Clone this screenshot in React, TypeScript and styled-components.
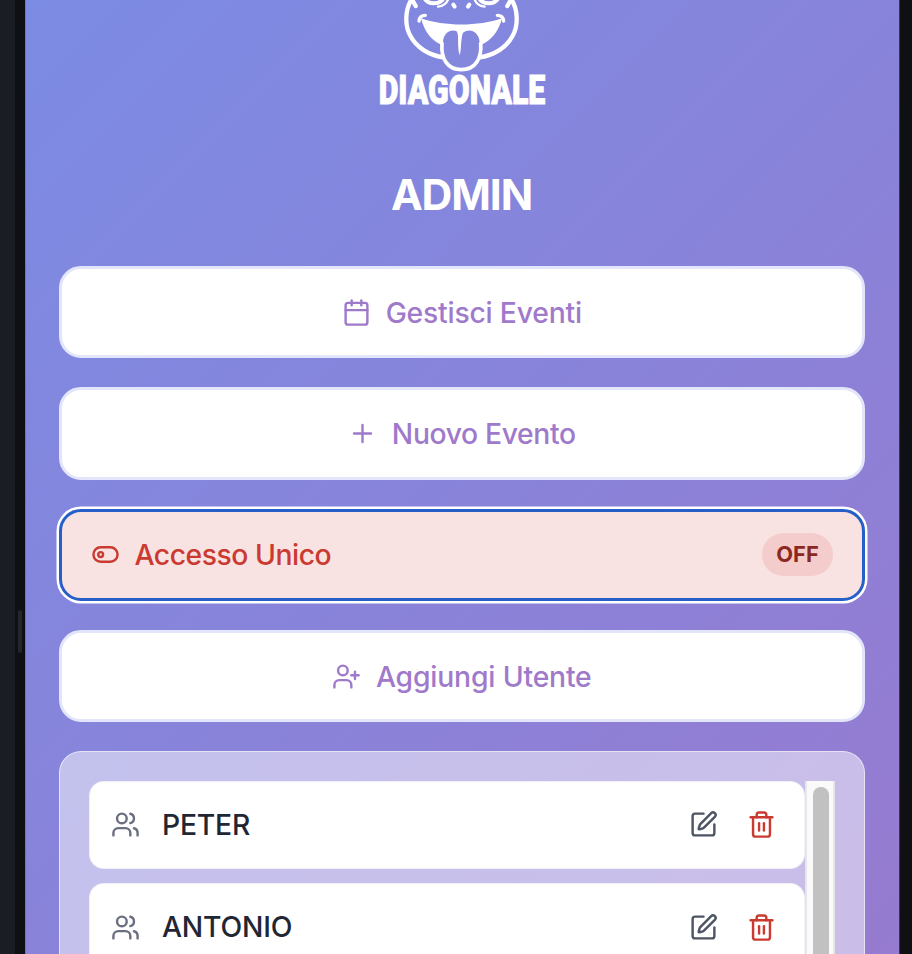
import React from "react";
import styled, { createGlobalStyle, css } from "styled-components";
import { Calendar, Plus, UserPlus, Users, SquarePen, Trash2 } from "lucide-react";

const GlobalStyle = createGlobalStyle`
  * { box-sizing: border-box; }
  body { margin: 0; overflow: hidden; background: #0f1014; }
`;

const Shell = styled.div`
  display: grid;
  grid-template-columns: 15px 10px 875px 12px;
  width: 912px;
  height: 954px;
  overflow: hidden;
  background: #0f1014;
  font-family: Inter, "Liberation Sans", sans-serif;
`;

const SidePanel = styled.div`
  background: #1a1d24;
`;

const Divider = styled.div`
  padding: 610px 3px 0 3px;
  background: #0f1014;
`;

const Grip = styled.div`
  width: 4px;
  height: 43px;
  border-radius: 2px;
  background: #25262d;
`;

const Screen = styled.main`
  display: flex;
  flex-direction: column;
  align-items: center;
  height: 954px;
  overflow: hidden;
  padding: 0 34px 0 33px;
  border-left: 1px solid #6d74b4;
  border-right: 1px solid #3a3650;
  background: linear-gradient(135deg, #7c8be3 0%, #8784db 45%, #967bd0 100%);
`;

const Logo = styled.svg`
  flex: none;
  width: 200px;
  height: 120px;
  overflow: visible;
`;

const Title = styled.h1`
  margin: 45px 1px 42px 0;
  height: 59px;
  line-height: 59px;
  font-size: 42.6px;
  font-weight: 700;
  letter-spacing: -1.1px;
  color: #fff;
`;

const Actions = styled.div`
  display: grid;
  grid-auto-rows: 92.3px;
  gap: 29px;
  width: 806px;
  flex: none;
`;

const ActionButton = styled.button<{ $danger?: boolean }>`
  display: flex;
  align-items: center;
  justify-content: center;
  gap: 14.5px;
  padding: 0 29px;
  border: 3px solid #e3e6fa;
  border-radius: 22px;
  background: #fff;
  color: #9f7acb;
  font: 500 28.3px Inter, "Liberation Sans", sans-serif;
  ${(p) =>
    p.$danger &&
    css`
      justify-content: flex-start;
      border-color: #275fc8;
      background: #f8e3e2;
      color: #ca3a31;
      box-shadow: 0 0 0 2.5px #fff;
    `}
`;

const Label = styled.span<{ $spacing: number }>`
  padding-top: 1px;
  letter-spacing: ${(p) => p.$spacing}px;
  white-space: nowrap;
`;

const StatusPill = styled.span`
  display: flex;
  align-items: center;
  justify-content: center;
  width: 71px;
  height: 43px;
  margin-left: auto;
  padding-bottom: 1px;
  border-radius: 22px;
  background: #f4cccb;
  color: #8c2822;
  font-size: 21.8px;
  font-weight: 700;
`;

const ListPanel = styled.section`
  display: flex;
  flex: none;
  width: 806px;
  height: 260px;
  margin-top: 29px;
  padding: 29px 29px 0;
  border: 1px solid rgba(255, 255, 255, 0.55);
  border-radius: 22px;
  background: rgba(255, 255, 255, 0.5);
`;

const UserList = styled.div`
  display: grid;
  grid-auto-rows: 88px;
  gap: 14.2px;
  width: 716px;
`;

const UserRow = styled.div`
  display: flex;
  align-items: center;
  padding: 0 28px 0.4px 21px;
  border: 1px solid #f1f0f8;
  border-radius: 14.5px;
  background: #fff;
  color: #6b7080;
`;

const UserName = styled.span`
  flex: 1;
  margin-left: 22px;
  padding-top: 0.6px;
  font-size: 28.3px;
  font-weight: 500;
  letter-spacing: -0.2px;
  color: #1f2735;
`;

const RowActions = styled.div`
  display: flex;
  gap: 29px;
  color: #4d5563;
`;

const DeleteIcon = styled(Trash2)`
  color: #ca3a31;
`;

const ScrollTrack = styled.div`
  width: 30px;
  padding: 6px 4px 0 6px;
  border: solid #e7e7e7;
  border-width: 0 2px;
  background: #fafafa;
`;

const ScrollThumb = styled.div`
  width: 16px;
  height: 240px;
  border-radius: 8px;
  background: #c1c1c1;
`;

const FrogLogo = () => (
  <Logo viewBox="0 0 600 360" fill="none" stroke="#fff" strokeLinecap="round" strokeLinejoin="round">
    <path d="M149 -2C128 30 128 79 146 109C163 142 200 165 243 172" strokeWidth="13" />
    <path d="M448 -2C469 30 469 79 451 109C434 142 397 165 354 172" strokeWidth="13" />
    <path d="M149 -3L161 18M448 -3L436 18" strokeWidth="13" />
    <path d="M188 -4C199 14 232 15 244 -4M352 -4C364 15 397 14 408 -4" strokeWidth="12" />
    <path d="M228 20C245 18 257 7 260 -8M368 20C351 18 339 7 336 -8" strokeWidth="7" />
    <path d="M274 14L278 20M322 14L318 20" strokeWidth="12" />
    <path
      d="M177 55C247 80 349 80 420 55C411 93 388 121 361 133L353 150L243 150L235 133C208 121 187 94 177 55Z"
      fill="#fff"
      stroke="none"
    />
    <path d="M171 63C172 52 178 46 190 46M425 63C424 52 418 46 406 46" strokeWidth="10" />
    <path
      d="M292 98C270 83 245 96 243 126C241 170 257 207 298 209C339 207 355 170 353 126C350 96 325 83 303 98"
      fill="#8388dc"
      stroke="none"
    />
    <path d="M240 130C236 175 256 209 298 209C340 209 360 175 356 130" strokeWidth="11" />
    <path d="M283 92C293 103 284 137 293 166C299 150 295 108 306 92Z" fill="#fff" stroke="none" />
    <text
      x="50"
      y="313"
      textLength="500"
      lengthAdjust="spacingAndGlyphs"
      fill="#fff"
      stroke="#fff"
      strokeWidth="3"
      fontFamily="Roboto, sans-serif"
      fontSize="122"
      fontWeight="900"
    >
      DIAGONALE
    </text>
  </Logo>
);

const ToggleIcon = () => (
  <svg width="29" height="29" viewBox="0 0 24 24" fill="none" stroke="currentColor" strokeWidth="2">
    <rect x="2" y="6" width="20" height="12" rx="6" />
    <circle cx="8" cy="12" r="2" />
  </svg>
);

const users = ["PETER", "ANTONIO"];

export default function App() {
  return (
    <Shell>
      <GlobalStyle />
      <SidePanel />
      <Divider>
        <Grip />
      </Divider>
      <Screen>
        <FrogLogo />
        <Title>ADMIN</Title>
        <Actions>
          <ActionButton>
            <Calendar size={29} />
            <Label $spacing={-0.2}>Gestisci Eventi</Label>
          </ActionButton>
          <ActionButton>
            <Plus size={29} />
            <Label $spacing={-0.37}>Nuovo Evento</Label>
          </ActionButton>
          <ActionButton $danger>
            <ToggleIcon />
            <Label $spacing={-0.47}>Accesso Unico</Label>
            <StatusPill>OFF</StatusPill>
          </ActionButton>
          <ActionButton>
            <UserPlus size={29} />
            <Label $spacing={-0.17}>Aggiungi Utente</Label>
          </ActionButton>
        </Actions>
        <ListPanel>
          <UserList>
            {users.map((name) => (
              <UserRow key={name}>
                <Users size={29} />
                <UserName>{name}</UserName>
                <RowActions>
                  <SquarePen size={29} />
                  <DeleteIcon size={29} />
                </RowActions>
              </UserRow>
            ))}
          </UserList>
          <ScrollTrack>
            <ScrollThumb />
          </ScrollTrack>
        </ListPanel>
      </Screen>
    </Shell>
  );
}
